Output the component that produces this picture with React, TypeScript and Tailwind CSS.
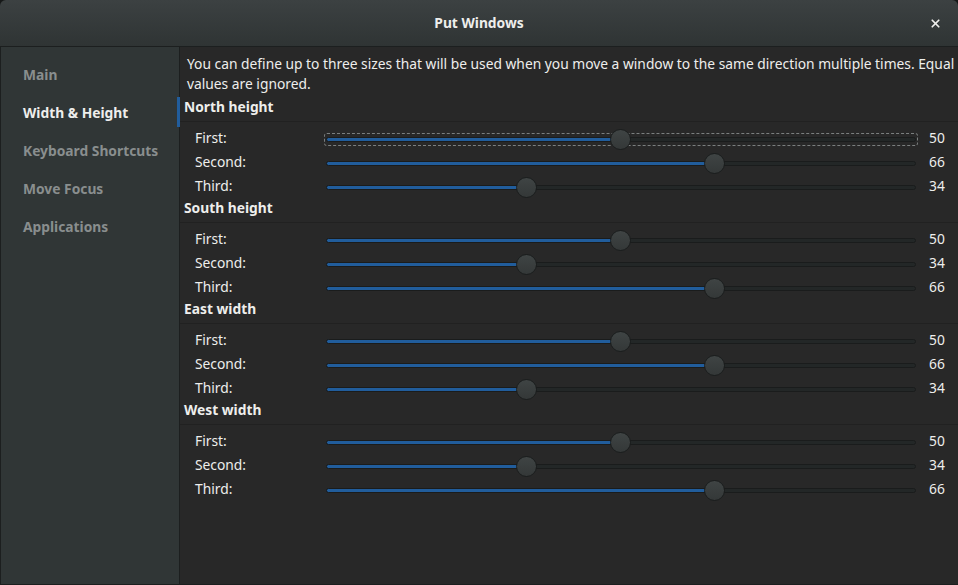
import { X } from "lucide-react";

type Row = { label: string; value: number; focused?: boolean };
type Section = { title: string; rows: Row[] };

const sections: Section[] = [
  {
    title: "North height",
    rows: [
      { label: "First:", value: 50, focused: true },
      { label: "Second:", value: 66 },
      { label: "Third:", value: 34 },
    ],
  },
  {
    title: "South height",
    rows: [
      { label: "First:", value: 50 },
      { label: "Second:", value: 34 },
      { label: "Third:", value: 66 },
    ],
  },
  {
    title: "East width",
    rows: [
      { label: "First:", value: 50 },
      { label: "Second:", value: 66 },
      { label: "Third:", value: 34 },
    ],
  },
  {
    title: "West width",
    rows: [
      { label: "First:", value: 50 },
      { label: "Second:", value: 34 },
      { label: "Third:", value: 66 },
    ],
  },
];

const navItems = ["Main", "Width & Height", "Keyboard Shortcuts", "Move Focus", "Applications"];

function Slider({ value, focused }: { value: number; focused?: boolean }) {
  // knob centre position inside the widget, ~5.875px per unit
  const center = 13.25 + value * 5.875;

  return (
    <div className="relative h-[24px] flex-1">
      {focused && (
        <div className="absolute left-[11px] right-[10px] top-[6px] h-[13px] rounded-[3px] border border-dashed border-[#7b7f7f]" />
      )}
      <div className="absolute left-[13px] right-[12px] top-[10px] h-[5px] rounded-full border border-[#1a1c1c] bg-[#232727]" />
      <div
        className="absolute left-[13px] top-[10px] h-[5px] rounded-l-full border border-[#1a1c1c] bg-[#215d9c]"
        style={{ width: center - 13 }}
      />
      <div
        className="absolute top-[2px] h-[21px] w-[21px] rounded-full border border-[#1a1d1d] bg-gradient-to-b from-[#3f4444] to-[#343838]"
        style={{ left: center - 10.5 }}
      />
    </div>
  );
}

export default function App() {
  return (
    <div
      className="h-[585px] w-[958px] bg-[#161818] text-[13.8px] text-[#eeeeec]"
      style={{ fontFamily: '"Noto Sans", "Open Sans", sans-serif' }}
    >
      <div className="flex h-full flex-col overflow-hidden rounded-t-[6px] border-b border-[#1c1f1f]">
        {/* Title bar */}
        <div className="relative flex h-[47px] shrink-0 items-center justify-center border-b border-[#1c1f1f] bg-gradient-to-b from-[#3c4142] to-[#2f3434]">
          <span className="font-bold">Put Windows</span>
          <button className="absolute right-[14px] top-[14px] flex h-[18px] w-[18px] items-center justify-center text-[#eeeeec]">
            <X className="h-[13px] w-[13px]" strokeWidth={3.2} />
          </button>
        </div>

        <div className="flex min-h-0 flex-1">
          {/* Sidebar */}
          <div className="flex w-[180px] shrink-0 flex-col border-l border-r border-[#1c1f1f] bg-[#303636] pt-[9px]">
            {navItems.map((item) => (
              <div
                key={item}
                className={
                  item === "Width & Height"
                    ? "flex h-[38px] items-center pl-[22px] font-bold text-[#eeeeec]"
                    : "flex h-[38px] items-center pl-[22px] font-bold text-[#898e8e]"
                }
              >
                {item}
              </div>
            ))}
          </div>

          {/* Content */}
          <div className="flex-1 bg-[#282828] pt-[7px]">
            <p className="pl-[7px] leading-[20px]">
              You can define up to three sizes that will be used when you move a window to the same direction multiple times. Equal values are ignored.
            </p>

            <div className="mt-[3px]">
              {sections.map((section, i) => (
                <div key={section.title}>
                  <div className="relative mb-[4px] border-b border-[#212121] pb-[4px] pl-[4px] font-bold leading-[20px]">
                    {i === 0 && <div className="absolute -left-[3px] top-0 h-[30px] w-[3px] bg-[#215d9c]" />}
                    {section.title}
                  </div>
                  {section.rows.map((row) => (
                    <div key={row.label} className="flex h-[24px] items-center pt-[1px]">
                      <span className="w-[133px] shrink-0 pl-[15px]">{row.label}</span>
                      <Slider value={row.value} focused={row.focused} />
                      <span className="w-[30px] shrink-0 pl-[1px]">{row.value}</span>
                    </div>
                  ))}
                </div>
              ))}
            </div>
          </div>
        </div>
      </div>
    </div>
  );
}
